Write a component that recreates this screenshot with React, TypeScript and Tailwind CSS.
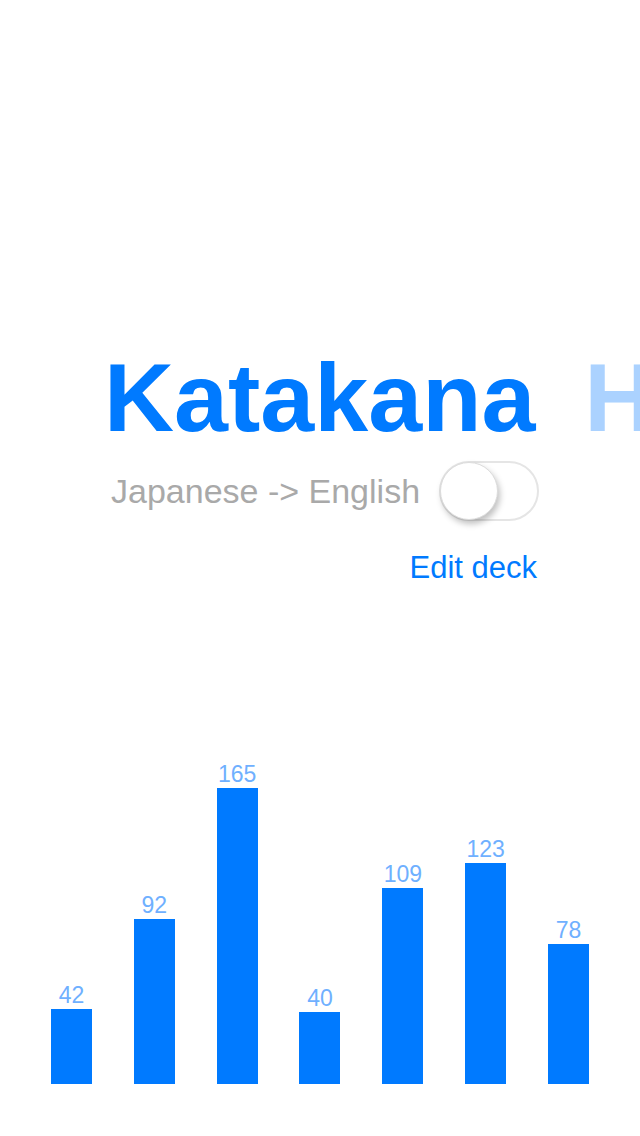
import React from "react";

const data = [42, 92, 165, 40, 109, 123, 78];
const SCALE = 1.794;

export default function App() {
  return (
    <div
      className="w-[640px] h-[1136px] bg-white overflow-hidden flex flex-col"
      style={{ fontFamily: '"Liberation Sans", Arial, Helvetica, sans-serif' }}
    >
      <div className="h-[349px] shrink-0" />
      <div className="flex flex-row whitespace-nowrap pl-[104px] gap-[49px] h-[96px] shrink-0">
        <span className="text-[97px] leading-none font-bold text-[#007aff]">Katakana</span>
        <span className="text-[97px] leading-none font-bold text-[#abd2ff]">Hiragana</span>
      </div>
      <div className="mt-[16px] h-[60px] shrink-0 flex flex-row items-center pl-[111px] gap-[19px]">
        <span className="text-[34px] leading-none text-[#a9a9a9] whitespace-nowrap">Japanese -&gt; English</span>
        <div className="relative w-[100px] h-[60px] rounded-full border-2 border-[#e5e5e5] bg-white">
          <div className="absolute left-[-1px] top-[-1px] w-[58px] h-[58px] rounded-full bg-white border border-[#dcdcdc] shadow-[2px_4px_6px_rgba(0,0,0,0.25)]" />
        </div>
      </div>
      <div className="mt-[31px] h-[31px] shrink-0 flex flex-row justify-end pr-[103px]">
        <span className="text-[31px] leading-none text-[#007aff] whitespace-nowrap">Edit deck</span>
      </div>
      <div className="flex-1 flex flex-row items-end justify-between px-[51px] pb-[52px]">
        {data.map((v, i) => (
          <div key={i} className="w-[41px] flex flex-col items-center">
            <span className="text-[23px] leading-none text-[#6fb0ff] mb-[2px]">{v}</span>
            <div className="w-[41px] bg-[#007aff]" style={{ height: Math.round(v * SCALE) }} />
          </div>
        ))}
      </div>
    </div>
  );
}
